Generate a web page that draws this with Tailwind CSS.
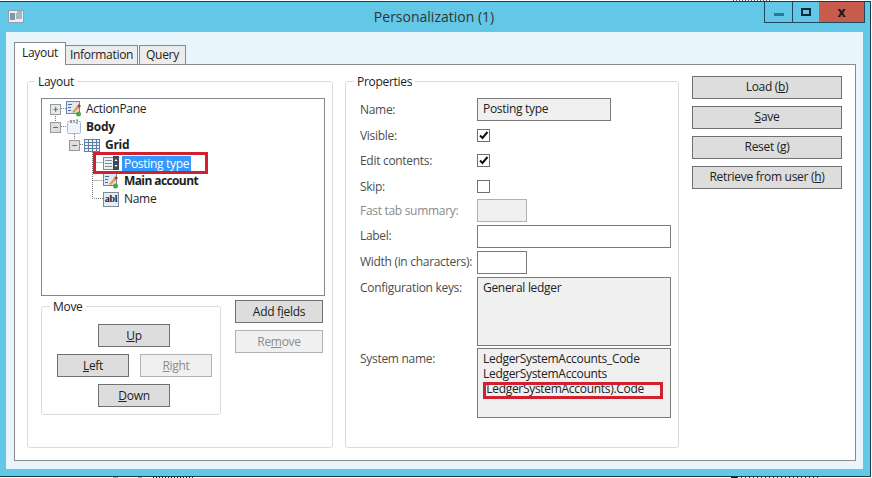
<!DOCTYPE html>
<html lang="en">
<head>
    <meta charset="UTF-8">
    <title>Personalization (1)</title>
    <script src="https://cdn.jsdelivr.net/npm/@tailwindcss/browser@4"></script>
</head>
<body class="bg-white">
    <div class="relative w-[872px] h-[478px] overflow-hidden pt-px font-['Open_Sans',sans-serif] text-[12px] leading-[16px] text-[#222] tracking-[-0.3px]">
        <!-- Bits of the page behind the window -->
        <div class="absolute left-[733px] top-0 w-[38px] h-px bg-[repeating-linear-gradient(90deg,#555_0_1px,transparent_1px_3px)]"></div>
        <div class="absolute left-[113px] bottom-0 w-[5px] h-px bg-[#aaa]"></div>
        <div class="absolute left-[138px] bottom-0 w-[4px] h-px bg-[#aaa]"></div>
        <div class="absolute left-[153px] bottom-0 w-[42px] h-px bg-[repeating-linear-gradient(90deg,#222_0_1px,transparent_1px_3px)]"></div>
        <div class="absolute left-[731px] bottom-0 w-[6px] h-px bg-[#111]"></div>
        <div class="absolute left-[737px] bottom-0 w-[81px] h-px bg-[repeating-linear-gradient(90deg,#333_0_1px,transparent_1px_4px)]"></div>
        <!-- Window -->
        <div class="relative w-[871px] h-[476px] bg-[#63c8e8] border-t border-r border-b border-t-[#333] border-r-[#1d3a48] border-b-[#1d3a48]">
            <!-- Title bar -->
            <div class="relative h-[30px] flex items-center justify-center">
                <svg class="absolute left-[8px] top-[8px]" width="16" height="14" viewBox="0 0 16 14">
                    <rect x="0.5" y="0.5" width="15" height="12" fill="#e8eef2" stroke="#8fa3ad"/>
                    <rect x="2" y="3" width="5" height="7" fill="#7f97ad"/>
                    <path d="M8 4h6M8 6h6M8 8h6M9 2h5" stroke="#6a7f8f"/>
                </svg>
                <span class="text-[14px] text-[#333] tracking-normal ml-[-2px]">Personalization (1)</span>
                <!-- Window controls -->
                <div class="absolute left-[764px] top-0 w-[101px] h-[21px] flex border border-t-0 border-[#1d4a5c]">
                    <div class="w-[28px] flex items-center justify-center border-r border-[#1d4a5c]"><div class="w-[10px] h-[3px] bg-[#2b7a94] mt-[4px]"></div></div>
                    <div class="w-[26px] flex items-center justify-center"><div class="w-[10px] h-[8px] border-2 border-[#0d2a38]"></div></div>
                    <div class="flex-1 flex items-center justify-center bg-[#c75b4c] font-bold text-[14px] text-[#1a1a1a]">x</div>
                </div>
            </div>
            <!-- Client area -->
            <div class="ml-[6px] w-[857px] h-[437px] bg-[#e8f5fd] pl-[8px] pt-[10px]">
                <!-- Tabs -->
                <div class="relative z-10 flex items-end h-[23px] -mb-px">
                    <div class="w-[52px] h-[23px] bg-white border border-b-0 border-[#8a8a8a] text-center leading-[20px]">Layout</div>
                    <div class="w-[72px] h-[20px] bg-[#ececec] border border-l-0 border-[#8a8a8a] text-center leading-[18px]">Information</div>
                    <div class="w-[47px] h-[20px] ml-px bg-[#ececec] border border-[#8a8a8a] text-center leading-[18px]">Query</div>
                </div>
                <!-- Tab panel -->
                <div class="relative w-[842px] h-[397px] bg-white border border-[#8a8a8a] flex pl-[12px] pt-[16px]">
                    <!-- Layout group -->
                    <div class="relative w-[306px] h-[367px] border border-[#dcdcdc] rounded-[3px] pl-[13px] pt-[16px]">
                        <span class="absolute left-[7px] top-[-8px] bg-white px-[3px]">Layout</span>
                        <!-- Tree -->
                        <div class="relative w-[284px] h-[198px] border border-[#828790] pt-px">
                            <svg class="absolute left-0 top-0" width="100" height="110" viewBox="0 0 100 110" fill="none" stroke="#777" stroke-dasharray="1 1">
                                <path d="M13.5 15V23M19 9.500h5M19 27.500h5M32.500 33V41M38 45.500h5M50.500 51V99.500H61M50.500 63.500H61M50.500 81.500H61"/>
                            </svg>
                            <div class="relative flex items-center h-[18px] pl-[8px]">
                                <span class="w-[11px] h-[11px] border border-[#999] bg-[#e8e8e8] flex items-center justify-center text-[10px] leading-none text-[#333]">+</span>
                                <svg class="ml-[5px]" width="16" height="16" viewBox="0 0 16 16">
                                    <rect x="0.5" y="0.5" width="13" height="12" fill="#dfe9f5" stroke="#6c88ad"/>
                                    <path d="M2 3.500h4M2 6.500h3M2 9.500h3" stroke="#4b6a94"/>
                                    <path d="M6 11l5-6 2 2-5 5z" fill="#e8a040"/>
                                    <path d="M11 5l2-2 2 2-2 2z" fill="#c4392f"/>
                                    <circle cx="12.500" cy="13" r="2.500" fill="#4fa44a"/>
                                </svg>
                                <span class="ml-[4px]">ActionPane</span>
                            </div>
                            <div class="relative flex items-center h-[18px] pl-[8px]">
                                <span class="w-[11px] h-[11px] border border-[#999] bg-[#dedede] flex items-center justify-center text-[10px] leading-none text-[#333]">&minus;</span>
                                <svg class="ml-[5px]" width="16" height="16" viewBox="0 0 16 16">
                                    <path d="M1.500 3.500v10q0 1 1 1h11q1 0 1-1v-10" fill="#eef4fa" stroke="#a9bccd"/>
                                    <path d="M1.500 2.500h2M12.500 2.500h2" stroke="#a9bccd"/>
                                    <path d="M4 1l2 3M6 1l-2 3M7 1l1 1.500 1-1.500M8 2.500v1.500M10 1h2l-2 3h2" stroke="#46535f" stroke-width="0.7" fill="none"/>
                                </svg>
                                <span class="ml-[4px] font-bold">Body</span>
                            </div>
                            <div class="relative flex items-center h-[18px] pl-[27px]">
                                <span class="w-[11px] h-[11px] border border-[#999] bg-[#dedede] flex items-center justify-center text-[10px] leading-none text-[#333]">&minus;</span>
                                <svg class="ml-[4px]" width="16" height="13" viewBox="0 0 16 13">
                                    <rect x="0.5" y="0.5" width="15" height="12" fill="#eaf1f9" stroke="#5f7fa8"/>
                                    <path d="M0 3.500h16M0 6.500h16M0 9.500h16M4.500 0v13M8.500 0v13M12.500 0v13" stroke="#5f7fa8"/>
                                </svg>
                                <span class="ml-[5px] font-bold">Grid</span>
                            </div>
                            <div class="relative flex items-center h-[18px] pl-[61px]">
                                <svg width="16" height="16" viewBox="0 0 16 16">
                                    <rect x="0.500" y="2.500" width="15" height="12" fill="#eceff3" stroke="#7d8a98"/>
                                    <path d="M2 5.500h7M2 8.500h7M2 11.500h7" stroke="#7d8a98"/>
                                    <rect x="10" y="1" width="6" height="14" fill="#3d4854"/>
                                    <path d="M11.500 6l1.500-2 1.500 2zM11.500 10l1.500 2 1.500-2z" fill="#fff"/>
                                </svg>
                                <span class="ml-[3px] bg-[#3399ff] text-white pl-[2px] w-[69px] h-[15px] leading-[15px] whitespace-nowrap">Posting type</span>
                            </div>
                            <div class="relative flex items-center h-[18px] pl-[61px]">
                                <svg width="16" height="16" viewBox="0 0 16 16">
                                    <rect x="0.5" y="0.5" width="13" height="12" fill="#dfe9f5" stroke="#6c88ad"/>
                                    <path d="M2 3.500h4M2 6.500h3M2 9.500h3" stroke="#4b6a94"/>
                                    <path d="M6 11l5-6 2 2-5 5z" fill="#e8a040"/>
                                    <path d="M11 5l2-2 2 2-2 2z" fill="#c4392f"/>
                                    <circle cx="12.500" cy="13" r="2.500" fill="#4fa44a"/>
                                </svg>
                                <span class="ml-[5px] font-bold tracking-[-0.6px]">Main account</span>
                            </div>
                            <div class="relative flex items-center h-[18px] pl-[61px]">
                                <span class="w-[16px] h-[15px] border border-[#7d8a98] bg-[#e6ebf2] font-bold text-[10px] leading-[12px] text-center font-['Liberation_Serif',serif]">abl</span>
                                <span class="ml-[5px]">Name</span>
                            </div>
                            <!-- Red marker over the selected row -->
                            <div class="absolute left-[51px] top-[53px] w-[115px] h-[22px] border-[3px] border-[#d2202f]"></div>
                        </div>
                        <div class="flex mt-[4px]">
                            <!-- Move group -->
                            <div class="relative w-[180px] h-[109px] mt-[6px] border border-[#dcdcdc] rounded-[3px] pl-[15px] pt-[17px]">
                                <span class="absolute left-[8px] top-[-8px] bg-white px-[3px]">Move</span>
                                <div class="w-[155px] flex flex-col gap-[7px]">
                                    <div class="ml-[41px] w-[72px] h-[23px] bg-[#dddddd] border border-[#707070] flex items-center justify-center"><span><u>U</u>p</span></div>
                                    <div class="w-full flex justify-between">
                                        <div class="w-[72px] h-[23px] bg-[#dddddd] border border-[#707070] flex items-center justify-center"><span><u>L</u>eft</span></div>
                                        <div class="w-[72px] h-[23px] bg-[#f0f0f0] border border-[#adb2b5] text-[#8c8c8c] flex items-center justify-center"><span><u>R</u>ight</span></div>
                                    </div>
                                    <div class="ml-[41px] w-[72px] h-[23px] bg-[#dddddd] border border-[#707070] flex items-center justify-center"><span><u>D</u>own</span></div>
                                </div>
                            </div>
                            <div class="ml-[14px] flex flex-col gap-[7px]">
                                <div class="w-[88px] h-[23px] bg-[#dddddd] border border-[#707070] flex items-center justify-center"><span>Add f<u>i</u>elds</span></div>
                                <div class="w-[88px] h-[23px] bg-[#f0f0f0] border border-[#adb2b5] text-[#8c8c8c] flex items-center justify-center"><span>Re<u>m</u>ove</span></div>
                            </div>
                        </div>
                    </div>
                    <!-- Properties group -->
                    <div class="relative ml-[12px] w-[334px] h-[367px] border border-[#dcdcdc] rounded-[3px] pl-[14px] pt-[16px] text-[#4d4d4d]">
                        <span class="absolute left-[8px] top-[-8px] bg-white px-[3px] text-[#222]">Properties</span>
                        <div class="flex items-center h-[23px]">
                            <span class="w-[117px]">Name:</span>
                            <div class="w-[134px] h-[23px] bg-[#f0f0f0] border border-[#7a7a7a] pl-[5px] leading-[20px] text-[#222]">Posting type</div>
                        </div>
                        <div class="flex items-center h-[25px] mt-[2px]">
                            <span class="w-[117px]">Visible:</span>
                            <div class="w-[13px] h-[13px] border border-[#707070] flex items-center justify-center">
                                <svg width="11" height="11" viewBox="0 0 11 11"><path d="M2 5.500l2.500 2.500 5-6" fill="none" stroke="#111" stroke-width="2"/></svg>
                            </div>
                        </div>
                        <div class="flex items-center h-[25px]">
                            <span class="w-[117px]">Edit contents:</span>
                            <div class="w-[13px] h-[13px] border border-[#707070] flex items-center justify-center">
                                <svg width="11" height="11" viewBox="0 0 11 11"><path d="M2 5.500l2.500 2.500 5-6" fill="none" stroke="#111" stroke-width="2"/></svg>
                            </div>
                        </div>
                        <div class="flex items-center h-[26px]">
                            <span class="w-[117px] mt-px">Skip:</span>
                            <div class="w-[13px] h-[13px] border border-[#707070]"></div>
                        </div>
                        <div class="flex items-center h-[23px]">
                            <span class="w-[117px] text-[#8a8a8a]">Fast tab summary:</span>
                            <div class="w-[50px] h-[23px] bg-[#f0f0f0] border border-[#adb2b5]"></div>
                        </div>
                        <div class="flex items-center h-[23px] mt-[3px]">
                            <span class="w-[117px] -mt-px">Label:</span>
                            <div class="w-[194px] h-[23px] border border-[#7a7a7a]"></div>
                        </div>
                        <div class="flex items-center h-[23px] mt-[3px]">
                            <span class="w-[117px] -mt-px whitespace-nowrap">Width (in characters):</span>
                            <div class="w-[50px] h-[23px] border border-[#7a7a7a]"></div>
                        </div>
                        <div class="flex h-[69px] mt-[3px]">
                            <span class="w-[117px] pt-[3px]">Configuration keys:</span>
                            <div class="w-[194px] bg-[#f0f0f0] border border-[#7a7a7a] pl-[5px] pt-[2px] text-[#222]">General ledger</div>
                        </div>
                        <div class="flex h-[70px] mt-[2px]">
                            <span class="w-[117px] pt-[3px]">System name:</span>
                            <div class="relative w-[194px] bg-[#f0f0f0] border border-[#7a7a7a] pl-[5px] pt-[2px] leading-[15px] text-[#222]">
                                <div>LedgerSystemAccounts_Code</div>
                                <div>LedgerSystemAccounts</div>
                                <div>(LedgerSystemAccounts).Code</div>
                                <div class="absolute left-[5px] top-[33px] w-[180px] h-[17px] border-[3px] border-[#d2202f]"></div>
                            </div>
                        </div>
                    </div>
                    <!-- Action buttons -->
                    <div class="ml-[13px] mt-[-5px] flex flex-col gap-[7px]">
                        <div class="w-[150px] h-[23px] pb-px bg-[#dddddd] border border-[#707070] flex items-center justify-center"><span>Load (<u>b</u>)</span></div>
                        <div class="w-[150px] h-[23px] pb-px bg-[#dddddd] border border-[#707070] flex items-center justify-center"><span><u>S</u>ave</span></div>
                        <div class="w-[150px] h-[23px] pb-px bg-[#dddddd] border border-[#707070] flex items-center justify-center"><span>Reset (<u>g</u>)</span></div>
                        <div class="w-[150px] h-[23px] pb-px bg-[#dddddd] border border-[#707070] flex items-center justify-center"><span>Retrieve from user (<u>h</u>)</span></div>
                    </div>
                </div>
            </div>
        </div>
    </div>
</body>
</html>
